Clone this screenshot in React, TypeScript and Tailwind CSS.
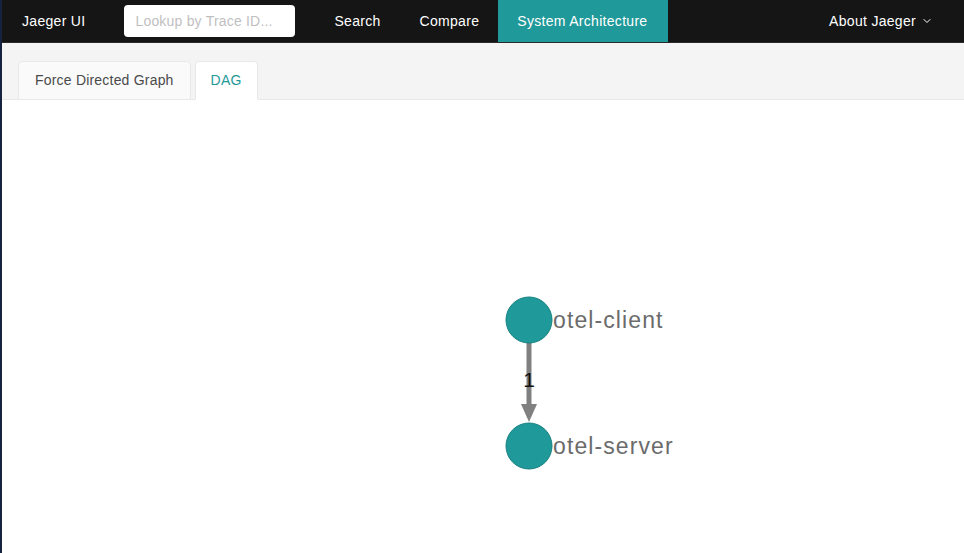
import { ChevronDown } from 'lucide-react';

const navLinks = ['Search', 'Compare', 'System Architecture'];

function TopNav() {
  return (
    <div className="flex h-[43px] items-stretch bg-[#151515] border-b border-[#2a2a2a] text-[14px] tracking-[0.3px] text-white">
      <div className="flex items-center pl-[20px] pr-[39px]">Jaeger UI</div>
      <div className="flex items-center">
        <div className="flex h-[32px] w-[171px] items-center rounded-[4px] bg-white px-[11px] tracking-[0.2px] text-[#bfbfbf]">
          Lookup by Trace ID...
        </div>
      </div>
      <div className="ml-[19px] flex items-stretch">
        {navLinks.map((link) => (
          <div
            key={link}
            className={
              link === 'System Architecture'
                ? 'flex items-center bg-[#1f9999] pl-[19px] pr-[21px]'
                : 'flex items-center pl-[20px] pr-[19px]'
            }
          >
            {link}
          </div>
        ))}
      </div>
      <div className="ml-auto flex items-center gap-[5px] pr-[31px]">
        About Jaeger
        <ChevronDown size={12} strokeWidth={2} />
      </div>
    </div>
  );
}

function Tabs() {
  return (
    <div className="flex h-[57px] items-end gap-[4px] border-b border-[#e8e8e8] bg-[#f4f4f4] pl-[16px] text-[14px] tracking-[0.2px]">
      <div className="-mb-px flex h-[39px] items-center rounded-t-[4px] border border-[#e8e8e8] bg-[#fafafa] px-[16px] text-[#4a4a4a]">
        Force Directed Graph
      </div>
      <div className="-mb-px flex h-[39px] items-center rounded-t-[4px] border border-b-white border-[#e8e8e8] bg-white px-[15px] text-[#1f9999]">
        DAG
      </div>
    </div>
  );
}

function Dag() {
  return (
    <svg className="absolute inset-0 h-full w-full" style={{ fontFamily: '"Liberation Sans", Arial, sans-serif' }}>
      <line x1={527} y1={242} x2={527} y2={306} stroke="#808080" strokeWidth={5} />
      <polygon points="519,304 535,304 527,322" fill="#808080" />
      <text x={527} y={287} textAnchor="middle" fontSize={21} fill="#111">
        1
      </text>
      <circle cx={527} cy={220} r={23} fill="#1f9999" stroke="#178080" strokeWidth={1} />
      <text x={551} y={228} fontSize={23} letterSpacing={1.1} fill="#6b6b6b">
        otel-client
      </text>
      <circle cx={527} cy={346} r={23} fill="#1f9999" stroke="#178080" strokeWidth={1} />
      <text x={551} y={354} fontSize={23} letterSpacing={1.1} fill="#6b6b6b">
        otel-server
      </text>
    </svg>
  );
}

export default function App() {
  return (
    <div
      className="flex h-[553px] w-[964px] flex-col overflow-hidden border-l-2 border-[#15243e] bg-white"
      style={{ fontFamily: '"Liberation Sans", Arial, sans-serif' }}
    >
      <TopNav />
      <Tabs />
      <div className="relative flex-1 bg-white">
        <Dag />
      </div>
    </div>
  );
}
